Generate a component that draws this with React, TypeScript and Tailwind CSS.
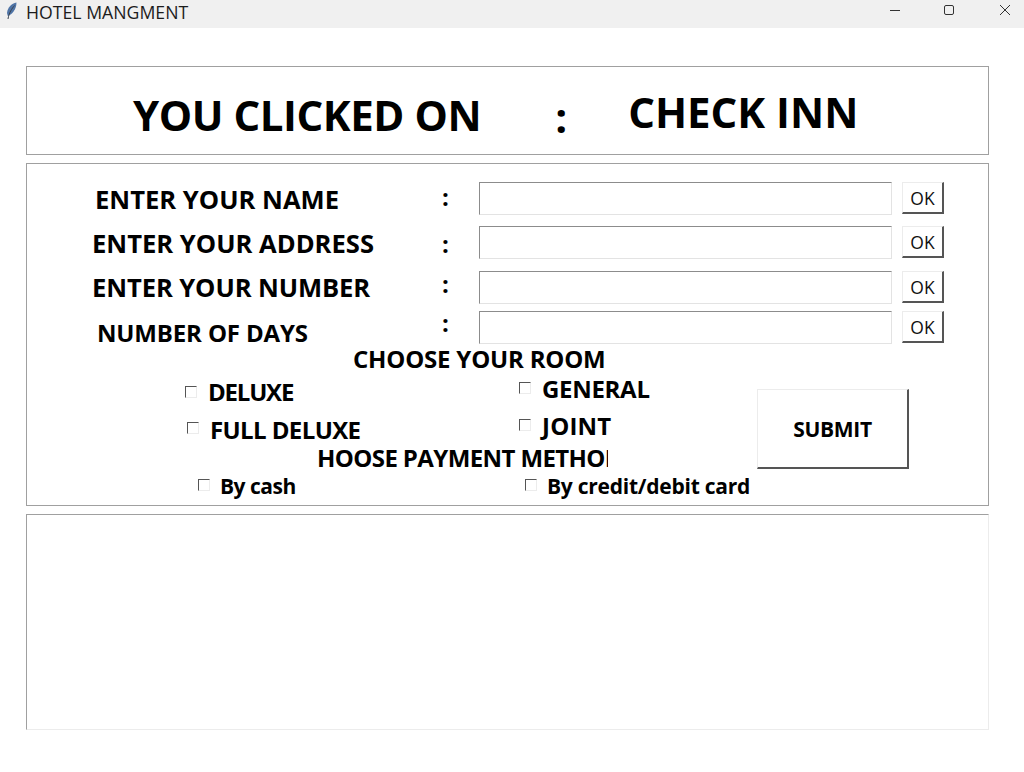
import React from 'react';

const font = "font-['Open_Sans','Noto_Sans',sans-serif]";

const fields = [
  { label: 'ENTER YOUR NAME', labelClass: 'pl-[68px] mt-[1px] text-[25.6px]', colonTop: 'mt-[-2px]', rowClass: 'mt-[18px]' },
  { label: 'ENTER YOUR ADDRESS', labelClass: 'pl-[65px] mt-[1px] text-[25.6px]', colonTop: 'mt-[1px]', rowClass: 'mt-[11px]' },
  { label: 'ENTER YOUR NUMBER', labelClass: 'pl-[65px] mt-[0px] text-[25.6px] tracking-[-0.1px]', colonTop: 'mt-[-4px]', rowClass: 'mt-[12px]' },
  { label: 'NUMBER OF DAYS', labelClass: 'pl-[70px] mt-[5px] text-[24px] tracking-[-0.15px]', colonTop: 'mt-[-5px]', rowClass: 'mt-[7px]' },
];

const Check = () => (
  <span className="block w-[12px] h-[12px] shrink-0 bg-white border border-[#ececec] border-t-[#555] border-l-[#555]" />
);

const Feather = () => (
  <svg width="12" height="18" viewBox="0 0 12 18" className="shrink-0">
    <path d="M10.5 0.5 C5.5 1.5 1.5 5.5 1 11 L1.8 14 C6 12.5 10.5 7.5 10.5 0.5 Z" fill="#4f74a6" />
    <path d="M8.5 3.5 C6 6.5 3 10.5 2 17" stroke="#39424f" strokeWidth="1" fill="none" />
  </svg>
);

export default function App() {
  return (
    <div className={`w-[1024px] h-[772px] bg-white overflow-hidden text-black ${font}`}>
      {/* title bar */}
      <div className="h-[28px] bg-[#f0f0f0] flex items-start pl-[6px]">
        <div className="mt-[2px]">
          <Feather />
        </div>
        <span className="ml-[8px] text-[17.7px] leading-[24px] text-[#1c1c1c]">HOTEL MANGMENT</span>
        <div className="ml-auto flex items-center pr-[13px] pt-[4px]">
          <svg width="12" height="12" viewBox="0 0 12 12" className="mr-[42px]">
            <path d="M1 6.5 H11" stroke="#333" strokeWidth="1" />
          </svg>
          <svg width="12" height="12" viewBox="0 0 12 12" className="mr-[44px]">
            <rect x="1.5" y="1.5" width="9" height="9" rx="1.5" fill="none" stroke="#333" strokeWidth="1" />
          </svg>
          <svg width="12" height="12" viewBox="0 0 12 12">
            <path d="M1 1 L11 11 M11 1 L1 11" stroke="#333" strokeWidth="1" />
          </svg>
        </div>
      </div>

      <div className="pt-[38px] pl-[26px] w-[989px] flex flex-col gap-[8px]">
        {/* heading panel */}
        <div className="h-[89px] border border-[#a0a0a0] flex items-start">
          <span className="ml-[106px] mt-[23px] text-[42px] leading-[50px] font-bold tracking-[-0.45px] whitespace-nowrap">YOU CLICKED ON</span>
          <span className="ml-[74px] mt-[25px] text-[42px] leading-[50px] font-bold">:</span>
          <span className="ml-[61px] mt-[20px] text-[42px] leading-[50px] font-bold whitespace-nowrap">CHECK INN</span>
        </div>

        {/* form panel */}
        <div className="h-[343px] border border-[#a0a0a0]">
          {fields.map((f) => (
            <div key={f.label} className={`flex items-start h-[33px] ${f.rowClass}`}>
              <div className={`w-[415px] shrink-0 ${f.labelClass} leading-[33px] font-bold whitespace-nowrap`}>
                {f.label}
              </div>
              <div className={`w-[37px] shrink-0 ${f.colonTop} text-[24px] leading-[33px] font-bold`}>:</div>
              <div className="w-[413px] h-[33px] shrink-0 bg-white border border-[#e3e3e3] border-t-[#8c8c8c] border-l-[#8c8c8c]" />
              <button className="ml-[10px] w-[42px] h-[32px] bg-white border border-[#ececec] border-r-[2px] border-b-[2px] border-r-[#555] border-b-[#555] text-[17.5px] leading-[28px] text-[#111]">
                OK
              </button>
            </div>
          ))}

          <div className="pl-[326px] text-[24px] leading-[30px] font-bold tracking-[-0.2px] whitespace-nowrap">CHOOSE YOUR ROOM</div>

          <div className="flex items-start mt-[-1px]">
            <div className="w-[730px] shrink-0">
              <div className="flex items-start h-[38px]">
                <div className="w-[492px] shrink-0 flex items-start pl-[158px] pt-[13px]">
                  <Check />
                  <span className="ml-[11px] mt-[-11px] text-[24px] leading-[33px] font-bold tracking-[-1.2px]">DELUXE</span>
                </div>
                <div className="flex items-start pt-[9px]">
                  <Check />
                  <span className="ml-[11px] mt-[-10px] text-[24px] leading-[33px] font-bold tracking-[-0.3px]">GENERAL</span>
                </div>
              </div>
              <div className="flex items-start h-[32px]">
                <div className="w-[492px] shrink-0 flex items-start pl-[160px] pt-[11px]">
                  <Check />
                  <span className="ml-[11px] mt-[-9px] text-[24px] leading-[33px] font-bold tracking-[-0.6px] whitespace-nowrap">FULL DELUXE</span>
                </div>
                <div className="flex items-start pt-[8px]">
                  <Check />
                  <span className="ml-[11px] mt-[-10px] text-[24px] leading-[33px] font-bold tracking-[0.2px]">JOINT</span>
                </div>
              </div>
              <div className="ml-[290px] w-[291px] h-[28px] overflow-hidden text-[24px] leading-[30px] font-bold tracking-[-0.6px] whitespace-nowrap">
                HOOSE PAYMENT METHOD
              </div>
            </div>
            <button className="mt-[16px] w-[152px] h-[80px] pt-[3px] bg-white border border-[#ececec] border-r-[2px] border-b-[2px] border-r-[#555] border-b-[#555] text-[21px] font-bold tracking-[-0.3px]">
              SUBMIT
            </button>
          </div>

          <div className="flex items-start mt-[6px]">
            <div className="w-[498px] shrink-0 flex items-start pl-[171px] pt-[2px]">
              <Check />
              <span className="ml-[10px] mt-[-7px] text-[21px] leading-[28px] font-bold tracking-[-0.5px]">By cash</span>
            </div>
            <div className="flex items-start pt-[2px]">
              <Check />
              <span className="ml-[10px] mt-[-7px] text-[21px] leading-[28px] font-bold tracking-[-0.25px] whitespace-nowrap">By credit/debit card</span>
            </div>
          </div>
        </div>

        {/* output box */}
        <div className="h-[216px] bg-white border border-[#ececec] border-t-[#a0a0a0] border-l-[#a0a0a0]" />
      </div>
    </div>
  );
}
